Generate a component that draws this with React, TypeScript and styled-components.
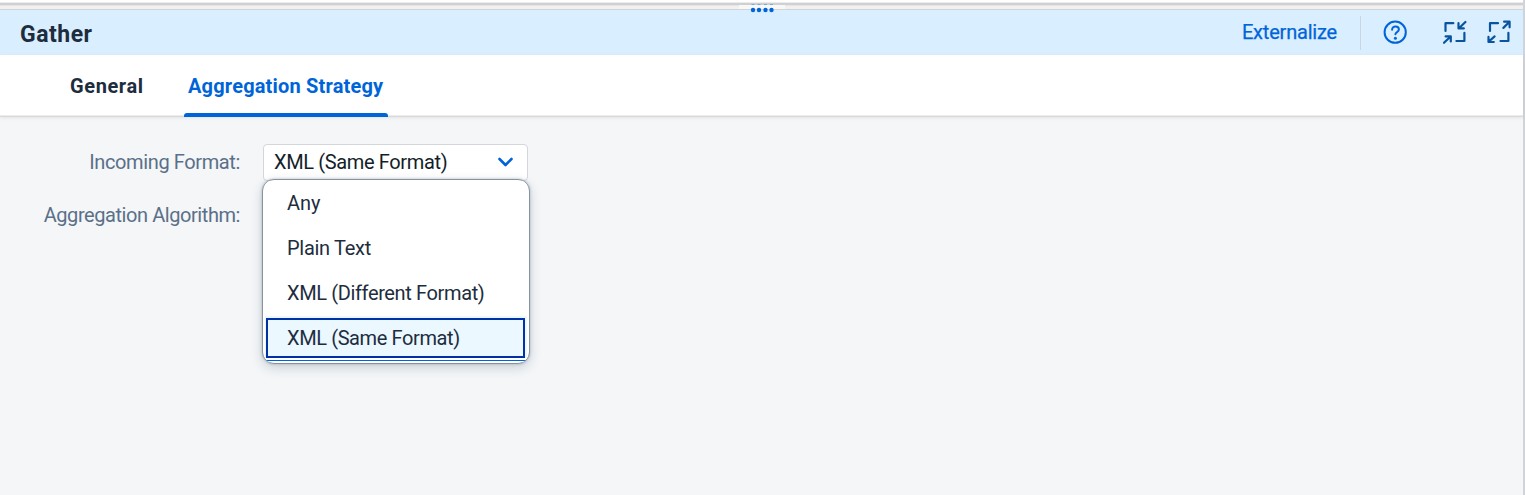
import React from 'react';
import styled, { createGlobalStyle } from 'styled-components';

const Global = createGlobalStyle`
  *, *::before, *::after { box-sizing: border-box; }
  body { margin: 0; overflow: hidden; font-family: Roboto, "Liberation Sans", sans-serif; font-size: 20px; color: #1d2d3e; }
`;
const Page = styled.main`
  height: 495px;
  background: #f4f6f8;
  border-right: 2px solid #d0d4d9;
  display: flex;
  flex-direction: column;
`;
const Splitter = styled.div`
  position: relative;
  height: 10px;
  flex: none;
  background: linear-gradient(#fff 0 2px, #ececec 2px 3px, #d0d0d0 3px 5px, #e6e6e6 5px 6px, #f1f1f1 6px 9px, #d2d4d6 9px 10px);
`;
const Grip = styled.svg`
  position: absolute;
  left: 739px;
  top: 3px;
`;
const Header = styled.header`
  height: 45px;
  flex: none;
  display: flex;
  align-items: center;
  background: #d9eeff;
  padding: 0 10px 0 20px;
`;
const Title = styled.h1`
  margin: 4px auto 0 0;
  font-size: 23px;
  line-height: 26px;
  font-weight: 700;
  letter-spacing: 0.5px;
`;
const Link = styled.button`
  border: 0;
  padding: 0;
  background: none;
  font: inherit;
  line-height: 24px;
  color: #0064d9;
  -webkit-text-stroke: 0.25px;
  letter-spacing: -0.2px;
  margin: 0 23px 1px 0;
`;
const Divider = styled.span`
  width: 1px;
  height: 34px;
  background: #ccd5dd;
  margin-right: 22px;
`;
const Icon = styled.svg<{ $gap?: number }>`
  width: 26px;
  height: 26px;
  flex: none;
  margin-right: ${p => p.$gap ?? 0}px;
  fill: none;
  stroke-linecap: round;
  stroke-linejoin: round;
`;
const Tabs = styled.nav`
  height: 62px;
  flex: none;
  display: flex;
  background: #fff;
  border-bottom: 1px solid #d9d9d9;
  box-shadow: 0 1px 3px #00000014, inset 0 -1px #ededed;
  padding-left: 66px;
  gap: 37px;
`;
const Tab = styled.div<{ $active?: boolean; $spacing: number }>`
  position: relative;
  padding: 19px 4px 0;
  line-height: 24px;
  font-weight: 700;
  letter-spacing: ${p => p.$spacing}px;
  white-space: nowrap;
  color: ${p => (p.$active ? '#0064d9' : '#1d2d3e')};
  width: ${p => (p.$active ? 204 : 81)}px;
  height: 62px;
  &::after {
    content: '';
    display: ${p => (p.$active ? 'block' : 'none')};
    position: absolute;
    left: 0;
    right: 0;
    bottom: 0;
    height: 4px;
    border-radius: 3px 3px 0 0;
    background: #0064d9;
  }
`;
const Form = styled.section`
  display: grid;
  grid-template-columns: 240px 265px;
  column-gap: 23px;
  grid-template-rows: 36px 36px;
  row-gap: 17px;
  padding-top: 27px;
`;
const Label = styled.label<{ $spacing: number }>`
  justify-self: end;
  line-height: 36px;
  color: #5a7088;
  white-space: nowrap;
  letter-spacing: ${p => p.$spacing}px;
`;
const Select = styled.div`
  position: relative;
  height: 37px;
  display: flex;
  align-items: center;
  justify-content: space-between;
  padding: 0 13px 1px 10px;
  background: #fff;
  border: 1px solid #d3d7dc;
  border-radius: 4px;
  color: #131e29;
`;
const Value = styled.span<{ $spacing: number }>`
  letter-spacing: ${p => p.$spacing}px;
  line-height: 24px;
  white-space: nowrap;
`;
const Menu = styled.div`
  position: absolute;
  z-index: 1;
  left: -2px;
  top: 34px;
  width: 268px;
  height: 185px;
  border: 1px solid #8593a2;
  border-radius: 12px;
  background: #fff;
  box-shadow: 0 4px 12px #2235482e, 0 0 3px #2235484d;
  padding: 1px 2px;
  overflow: hidden;
`;
const Option = styled.div<{ $selected?: boolean }>`
  position: relative;
  height: ${p => (p.$selected ? 46 : 45)}px;
  display: flex;
  align-items: center;
  padding: 0 0 2px 22px;
  color: #1d2d3e;
  background: ${p => (p.$selected ? 'linear-gradient(#ebf8ff 0 42px, #fff 42px 44px, #0064d9 44px 45px, #fff 45px)' : '#fff')};
  &::before {
    content: '';
    display: ${p => (p.$selected ? 'block' : 'none')};
    position: absolute;
    left: 1px;
    right: 2px;
    top: 2px;
    height: 40px;
    border: 2px solid #0032a5;
  }
`;

const options = [
  { text: 'Any', spacing: -0.1 },
  { text: 'Plain Text', spacing: -0.3 },
  { text: 'XML (Different Format)', spacing: -0.37 },
  { text: 'XML (Same Format)', spacing: -0.39 },
];

export default function App() {
  return (
    <>
      <Global />
      <Page>
        <Splitter>
          <Grip width="46" height="10" fill="#0064d9">
            <path d="M0 2H46V6H0Z" fill="#f8f8f8" />
            {[14, 20, 26.5, 32.5].map(x => (
              <g key={x}>
                <path d={`M${x - 1.5} 1.5h3`} stroke="#75a9df" />
                <circle cx={x} cy="7" r="2.2" />
              </g>
            ))}
          </Grip>
        </Splitter>
        <Header>
          <Title>Gather</Title>
          <Link>Externalize</Link>
          <Divider />
          <Icon $gap={34} viewBox="0 0 26 26" stroke="#0064d9" strokeWidth="2">
            <circle cx="12.2" cy="12.2" r="10.6" />
            <path d="M9.1 9.8C9.1 5.2 15.9 5.7 15.9 9.6C15.9 12.2 12.4 12 12.4 14.3" />
            <circle cx="12.4" cy="18.2" r="1.5" fill="#0064d9" stroke="none" />
          </Icon>
          <Icon $gap={18} viewBox="0 0 26 26" stroke="#0854a0" strokeWidth="2.2">
            <path d="M2.5 11V3.2H10.3M21.4 12.9V21H13.4M22.4 2L16 8.3M15.5 3.2V8.4H20.8M1 22.8L7.6 16.5M2.6 16.4H7.8V21.4" />
          </Icon>
          <Icon viewBox="0 0 26 26" stroke="#0854a0" strokeWidth="2.2">
            <path d="M3 11V3.2H11M21.4 12.9V21H13.5M16.4 7.9L22.5 1.8M17.1 1.7H22.6V7.3M7.6 16.4L1.6 21.8M1.5 16.9V22H6.8" />
          </Icon>
        </Header>
        <Tabs>
          <Tab $spacing={0.6}>General</Tab>
          <Tab $active $spacing={0.18}>Aggregation Strategy</Tab>
        </Tabs>
        <Form>
          <Label $spacing={-0.38}>Incoming Format:</Label>
          <Select>
            <Value $spacing={-0.36}>XML (Same Format)</Value>
            <svg width="18" height="12" fill="none" stroke="#0064d9" strokeWidth="2.6" strokeLinecap="round" strokeLinejoin="round">
              <path d="M3.5 3L9.5 9L15.5 3" />
            </svg>
            <Menu>
              {options.map((o, i) => (
                <Option key={o.text} $selected={i === 3}>
                  <Value $spacing={o.spacing}>{o.text}</Value>
                </Option>
              ))}
            </Menu>
          </Select>
          <Label $spacing={-0.43}>Aggregation Algorithm:</Label>
        </Form>
      </Page>
    </>
  );
}
